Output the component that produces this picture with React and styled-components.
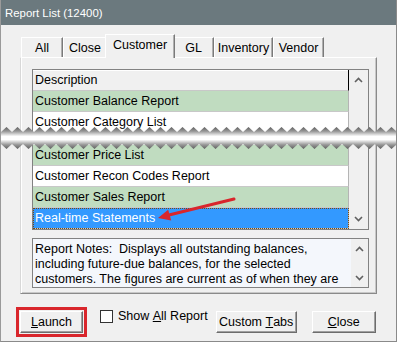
import React from 'react';
import styled, { createGlobalStyle } from 'styled-components';

const GlobalStyle = createGlobalStyle`
  html, body {
    margin: 0;
    padding: 0;
    background: #ffffff;
  }
  body {
    font-family: "Liberation Sans", Arial, sans-serif;
    font-size: 12.5px;
    color: #000;
  }
`;

// window frame
const Window = styled.div`
  position: relative;
  width: 395px;
  height: 341px;
  background: #f0f0f0;
  border-left: 1px solid #9a9a9a;
  border-right: 1px solid #8a8a8a;
  border-bottom: 1px solid #8a8a8a;
  display: flex;
  flex-direction: column;
  overflow: hidden;
`;

const TitleBar = styled.div`
  height: 25px;
  background: #6b797e;
  color: #ffffff;
  font-size: 11.4px;
  display: flex;
  align-items: center;
  padding-left: 5px;
  margin-left: -1px;
`;

const Content = styled.div`
  padding: 9px 19px 0 19px;
  display: flex;
  flex-direction: column;
`;

// tabs
const TabRow = styled.div`
  display: flex;
  align-items: flex-end;
  height: 23px;
  padding-left: 1px;
  position: relative;
  z-index: 1;
`;

const Tab = styled.div`
  box-sizing: border-box;
  width: ${(p) => p.w}px;
  height: ${(p) => (p.active ? 24 : 20)}px;
  margin: ${(p) => (p.active ? '0 -2px -1px -2px' : '0')};
  background: #f0f0f0;
  border-top: 1px solid #ffffff;
  border-left: 1px solid #ffffff;
  border-right: 1px solid #7a7a7a;
  box-shadow: inset -1px 0 0 #b0b0b0;
  display: flex;
  align-items: center;
  justify-content: center;
  padding-bottom: ${(p) => (p.active ? 4 : 0)}px;
  position: relative;
  z-index: ${(p) => (p.active ? 2 : 1)};
`;

const Panel = styled.div`
  box-sizing: border-box;
  width: 357px;
  height: 237px;
  border-top: 1px solid #ffffff;
  border-left: 1px solid #d8d8d8;
  border-right: 1px solid #8a8a8a;
  border-bottom: 1px solid #8a8a8a;
  box-shadow: inset 1px 0 0 #ffffff, inset -1px -1px 0 #c8c8c8;
  padding: 11px 0 0 11px;
  display: flex;
  flex-direction: column;
`;

// list view
const ListBox = styled.div`
  width: 337px;
  height: 161px;
  box-sizing: border-box;
  border: 1px solid #828282;
  background: #ffffff;
  display: flex;
`;

const Rows = styled.div`
  width: 316px;
  display: flex;
  flex-direction: column;
`;

const Header = styled.div`
  height: 20px;
  border-bottom: 1px solid #c8c8c8;
  border-right: 1px solid #000000;
  background: #f0f0f0;
  box-shadow: inset 0 1px 0 #ffffff;
  display: flex;
  align-items: center;
  padding-left: 2px;
`;

const Row = styled.div`
  box-sizing: border-box;
  height: 21px;
  border-bottom: 1px solid #c8c8c8;
  border-right: 1px solid #b4b4b4;
  background: ${(p) => (p.selected ? '#3399ff' : p.green ? '#c0dcc0' : '#ffffff')};
  color: ${(p) => (p.selected ? '#ffffff' : '#000000')};
  outline: ${(p) => (p.selected ? '1px dotted #7a4a10' : 'none')};
  outline-offset: -1px;
  display: flex;
  align-items: center;
  padding-left: 2px;
`;

const Gap = styled.div`
  height: 12px;
  flex: none;
`;

const ScrollBar = styled.div`
  flex: 1;
  background: #f0f0f0;
  display: flex;
  flex-direction: column;
  justify-content: space-between;
  align-items: center;
  padding: ${(p) => p.pad || '7px 0 7px 0'};
`;

const NotesBox = styled.div`
  width: 337px;
  height: 50px;
  box-sizing: border-box;
  margin-top: 8px;
  border: 1px solid #828282;
  background: #f4f7fc;
  display: flex;
`;

const NotesText = styled.div`
  width: 316px;
  padding: 3px 0 0 2px;
  line-height: 15px;
  overflow: hidden;
  white-space: nowrap;
`;

// bottom buttons
const ButtonBar = styled.div`
  display: flex;
  align-items: center;
  margin-top: 13px;
`;

const Highlight = styled.div`
  border: 3px solid #d9262c;
  padding: 1px;
  margin-left: -4px;
  display: flex;
`;

const Button = styled.div`
  box-sizing: border-box;
  width: ${(p) => p.w}px;
  height: 22px;
  margin-left: ${(p) => p.ml || 0}px;
  background: #f0f0f0;
  border-top: 1px solid #ffffff;
  border-left: 1px solid #ffffff;
  border-right: 1px solid #6d6d6d;
  border-bottom: 1px solid #6d6d6d;
  box-shadow: inset -1px -1px 0 #a0a0a0;
  display: flex;
  align-items: center;
  justify-content: center;
`;

const CheckLabel = styled.label`
  display: flex;
  align-items: center;
  align-self: flex-start;
  margin-left: 13px;
  margin-top: 2px;
`;

const Box = styled.span`
  width: 11px;
  height: 11px;
  border: 1px solid #333333;
  background: #ffffff;
  margin-right: 5px;
`;

const U = styled.span`
  text-decoration: underline;
`;

const Overlay = styled.svg`
  position: absolute;
  left: ${(p) => p.x}px;
  top: ${(p) => p.y}px;
  pointer-events: none;
  z-index: 5;
`;

const Chevron = ({ down }) => (
  <svg width="9" height="6" viewBox="0 0 9 6">
    <path
      d={down ? 'M1 1 L4.5 4.5 L8 1' : 'M1 5 L4.5 1.5 L8 5'}
      fill="none"
      stroke="#606060"
      strokeWidth="1.6"
    />
  </svg>
);

const teeth = (top) => {
  let d = top ? 'M0 5' : 'M0 17';
  for (let x = 0; x < 400; x += 11) {
    d += top ? ` L${x + 5.5} 0 L${x + 11} 5` : ` L${x + 5.5} 22 L${x + 11} 17`;
  }
  d += ' L400 11 L0 11 Z';
  return d;
};

const Tear = () => (
  <Overlay x={0} y={127} width="398" height="22" viewBox="0 0 398 22">
    <defs>
      <linearGradient id="tt" x1="0" y1="0" x2="0" y2="1">
        <stop offset="0" stopColor="#5e5e5e" />
        <stop offset="0.4" stopColor="#9a9a9a" />
        <stop offset="0.85" stopColor="#ffffff" />
      </linearGradient>
      <linearGradient id="tb" x1="0" y1="0" x2="0" y2="1">
        <stop offset="0.15" stopColor="#ffffff" />
        <stop offset="0.6" stopColor="#9a9a9a" />
        <stop offset="1" stopColor="#5e5e5e" />
      </linearGradient>
    </defs>
    <path d={teeth(true)} fill="url(#tt)" />
    <path d={teeth(false)} fill="url(#tb)" />
  </Overlay>
);

const Arrow = () => (
  <Overlay x={150} y={192} width="90" height="34" viewBox="0 0 90 34">
    <line x1="17" y1="23.3" x2="83" y2="7" stroke="#d9262c" strokeWidth="3" strokeLinecap="round" />
    <polygon points="7,26 20.2,28.4 17.2,17.8" fill="#d9262c" />
  </Overlay>
);

const tabs = [
  { label: 'All', w: 42 },
  { label: 'Close', w: 44 },
  { label: 'Customer', w: 70, active: true },
  { label: 'GL', w: 41 },
  { label: 'Inventory', w: 59 },
  { label: 'Vendor', w: 51 },
];

export default function App() {
  return (
    <>
      <GlobalStyle />
      <Window>
        <TitleBar>Report List (12400)</TitleBar>
        <Content>
          <TabRow>
            {tabs.map((t) => (
              <Tab key={t.label} w={t.w} active={t.active}>
                {t.label}
              </Tab>
            ))}
          </TabRow>
          <Panel>
            <ListBox>
              <Rows>
                <Header>Description</Header>
                <Row green>Customer Balance Report</Row>
                <Row>Customer Category List</Row>
                <Gap />
                <Row green>Customer Price List</Row>
                <Row>Customer Recon Codes Report</Row>
                <Row green>Customer Sales Report</Row>
                <Row selected>Real-time Statements</Row>
              </Rows>
              <ScrollBar>
                <Chevron />
                <Chevron down />
              </ScrollBar>
            </ListBox>
            <NotesBox>
              <NotesText>
                Report Notes:&nbsp; Displays all outstanding balances,
                <br />
                including future-due balances, for the selected
                <br />
                customers. The figures are current as of when they are
              </NotesText>
              <ScrollBar pad="7px 0 6px 0">
                <Chevron />
                <Chevron down />
              </ScrollBar>
            </NotesBox>
          </Panel>
          <ButtonBar>
            <Highlight>
              <Button w={63}>
                <U>L</U>aunch
              </Button>
            </Highlight>
            <CheckLabel>
              <Box />
              Show&nbsp;<U>A</U>ll Report
            </CheckLabel>
            <Button w={81} ml={8}>
              Custom&nbsp;<U>T</U>abs
            </Button>
            <Button w={64} ml={15}>
              <U>C</U>lose
            </Button>
          </ButtonBar>
        </Content>
        <Tear />
        <Arrow />
      </Window>
    </>
  );
}
